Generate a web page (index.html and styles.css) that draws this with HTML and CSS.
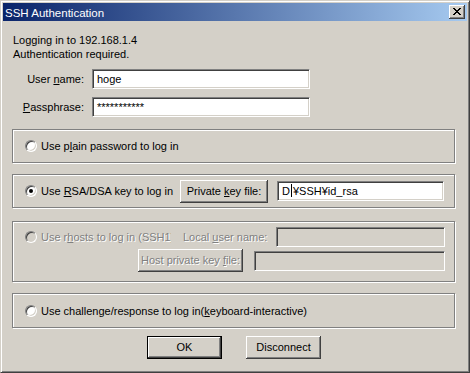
FILE: index.html
```html
<!DOCTYPE html>
<html lang="en">
<head>
    <meta charset="UTF-8">
    <title>SSH Authentication</title>
    <link rel="stylesheet" href="styles.css">
</head>
<body>
<div class="window">
    <div class="titlebar">
        <span class="title">SSH Authentication</span>
        <span class="close">
            <svg width="8" height="7" viewBox="0 0 8 7" shape-rendering="crispEdges">
                <path d="M0 0h2v1H0zM6 0h2v1H6zM1 1h2v1H1zM5 1h2v1H5zM2 2h4v1H2zM3 3h2v1H3zM2 4h4v1H2zM1 5h2v1H1zM5 5h2v1H5zM0 6h2v1H0zM6 6h2v1H6z" fill="#000"/>
            </svg>
        </span>
    </div>
    <div class="content">
        <p class="msg">Logging in to 192.168.1.4<br>Authentication required.</p>

        <div class="field">
            <label class="field-label">User <u>n</u>ame:</label>
            <div class="edit field-edit">hoge</div>
        </div>
        <div class="field">
            <label class="field-label"><u>P</u>assphrase:</label>
            <div class="edit field-edit">***********</div>
        </div>

        <div class="group group-short">
            <span class="radio"></span>
            <span class="opt">Use p<u>l</u>ain password to log in</span>
        </div>

        <div class="group group-short">
            <span class="radio checked"></span>
            <span class="opt opt-rsa">Use <u>R</u>SA/DSA key to log in</span>
            <span class="btn btn-key">Private <u>k</u>ey file:</span>
            <div class="edit edit-key">D<span class="caret"></span>¥SSH¥id_rsa</div>
        </div>

        <div class="group group-rhosts disabled">
            <div class="row">
                <span class="radio off"></span>
                <span class="opt opt-rhosts">Use r<u>h</u>osts to log in (SSH1)</span>
                <span class="local-label">Local <u>u</u>ser name:</span>
                <div class="edit off edit-local"></div>
            </div>
            <div class="row row-host">
                <span class="btn btn-host">Host private key <u>f</u>ile:</span>
                <div class="edit off edit-host"></div>
            </div>
        </div>

        <div class="group group-tis">
            <span class="radio"></span>
            <span class="opt">Use challenge/response to log in(<u>k</u>eyboard-interactive)</span>
        </div>

        <div class="actions">
            <span class="btn btn-default">OK</span>
            <span class="btn">Disconnect</span>
        </div>
    </div>
</div>
</body>
</html>
```

FILE: styles.css
```css
body {
  margin: 0;
  background: #d4d0c8;
  font-family: Tahoma, 'Liberation Sans', Arial, sans-serif;
  font-size: 11px;
  color: #000;
}
.window {
  width: 470px;
  height: 373px;
  box-sizing: border-box;
  background: #d4d0c8;
  border: 1px solid;
  border-color: #d4d0c8 #404040 #404040 #d4d0c8;
  box-shadow: inset 1px 1px #fff, inset -1px -1px #808080;
  padding: 2px;
}
.titlebar {
  height: 18px;
  display: flex;
  align-items: center;
  padding: 0 2px;
  background: linear-gradient(90deg, #0a246a 0%, #a6caf0 100%);
}
.title {
  color: #fff;
  font-size: 11.5px;
  margin-top: 1px;
}
.close {
  margin-left: auto;
  width: 16px;
  height: 14px;
  box-sizing: border-box;
  background: #d4d0c8;
  box-shadow: inset -1px -1px #404040, inset 1px 1px #fff, inset -2px -2px #808080;
  display: flex;
  align-items: center;
  justify-content: center;
}
.close svg {
  display: block;
  margin: 0 1px 1px 0;
}
.content {
  padding: 0 9px;
}
.msg {
  margin: 12px 0 0;
  line-height: 14px;
  padding-left: 1px;
}
.field {
  display: flex;
  align-items: center;
  margin-top: 8px;
}
.field-label {
  width: 72px;
  text-align: right;
}
.edit {
  box-sizing: border-box;
  height: 20px;
  line-height: 18px;
  padding: 0 4px;
  background: #fff;
  border: 1px solid;
  border-color: #808080 #fff #fff #808080;
  box-shadow: inset 1px 1px #404040, inset -1px -1px #d4d0c8;
  white-space: nowrap;
  overflow: hidden;
}
.edit.off {
  background: #d4d0c8;
}
.field-edit {
  width: 218px;
  margin-left: 8px;
}
.group {
  box-sizing: border-box;
  width: 443px;
  border: 1px solid #808080;
  box-shadow: inset 1px 1px #fff, 1px 1px #fff;
  display: flex;
  align-items: center;
  padding-left: 12px;
}
.group-short {
  height: 34px;
  margin-top: 12px;
}
.group-short + .group-short {
  margin-top: 11px;
}
.group-rhosts {
  height: 61px;
  margin-top: 13px;
  flex-direction: column;
  align-items: stretch;
  padding-top: 5px;
}
.group-tis {
  height: 35px;
  margin-top: 11px;
}
.radio {
  flex: none;
  width: 12px;
  height: 12px;
  box-sizing: border-box;
  border-radius: 50%;
  border: 1px solid;
  border-color: #808080 #fff #fff #808080;
  box-shadow: inset 1px 1px #404040, inset -1px -1px #d4d0c8;
  background: #fff;
  margin-right: 4px;
  position: relative;
}
.radio.off {
  background: #d4d0c8;
}
.radio.checked::after {
  content: '';
  position: absolute;
  left: 3px;
  top: 3px;
  width: 4px;
  height: 4px;
  border-radius: 50%;
  background: #000;
}
.opt {
  white-space: nowrap;
}
.opt-rsa {
  width: 139px;
}
.btn {
  box-sizing: border-box;
  display: inline-block;
  height: 23px;
  line-height: 22px;
  text-align: center;
  background: #d4d0c8;
  box-shadow: inset -1px -1px #404040, inset 1px 1px #fff, inset -2px -2px #808080;
  white-space: nowrap;
}
.btn-key {
  width: 88px;
}
.edit-key {
  width: 167px;
  margin-left: 9px;
}
.caret {
  display: inline-block;
  width: 1px;
  height: 13px;
  background: #000;
  vertical-align: -2px;
  margin: 0 1px;
}
.row {
  display: flex;
  align-items: center;
  height: 20px;
}
.row-host {
  height: 23px;
  margin-top: 2px;
}
.disabled .opt,
.disabled .local-label,
.disabled .btn {
  color: #808080;
  text-shadow: 1px 1px #fff;
}
.opt-rhosts {
  width: 130px;
  overflow: hidden;
}
.local-label {
  margin-left: 12px;
  width: 93px;
}
.edit-local {
  width: 169px;
}
.btn-host {
  width: 105px;
  margin-left: 113px;
}
.edit-host {
  width: 191px;
  margin-left: 11px;
}
.actions {
  display: flex;
  justify-content: center;
  gap: 24px;
  margin-top: 8px;
  padding-right: 2px;
}
.actions .btn {
  width: 75px;
}
.btn-default {
  border: 1px solid #000;
  line-height: 20px;
}
```
